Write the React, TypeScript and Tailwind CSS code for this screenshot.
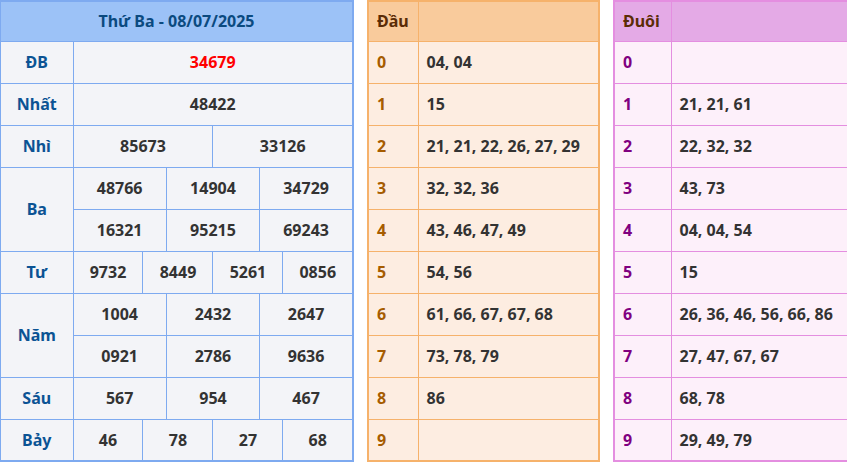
import React from 'react';

const lb = 'border border-[#7eaaf0] text-[#0b5394] font-bold text-center bg-[#f3f4f8]';
const cb = 'border border-[#7eaaf0] text-[#333] font-bold text-center bg-[#f3f4f8]';

const dau = ['04, 04', '15', '21, 21, 22, 26, 27, 29', '32, 32, 36', '43, 46, 47, 49', '54, 56', '61, 66, 67, 67, 68', '73, 78, 79', '86', ''];
const duoi = ['', '21, 21, 61', '22, 32, 32', '43, 73', '04, 04, 54', '15', '26, 36, 46, 56, 66, 86', '27, 47, 67, 67', '68, 78', '29, 49, 79'];

function Row({ label, vals, rows = 1 }: { label: string; vals: string[][]; rows?: number }) {
  return (
    <>
      {vals.map((r, i) => (
        <tr key={i} className="h-[42px]">
          {i === 0 && <td rowSpan={rows} className={lb}>{label}</td>}
          {r.map((v, j) => (
            <td key={j} colSpan={12 / r.length} className={`${cb} ${label === 'ĐB' ? 'text-[#ff0000]' : ''}`}>{v}</td>
          ))}
        </tr>
      ))}
    </>
  );
}

export default function App() {
  return (
    <div className="flex items-start bg-white text-[16px] font-['Liberation_Sans',Arial,sans-serif] w-[847px] h-[463px] overflow-hidden">
      <table className="table-fixed border-collapse w-[355px] -ml-px shrink-0 border-2 border-[#7eaaf0]">
        <colgroup>
          <col className="w-[73px]" />
          {Array.from({ length: 12 }).map((_, i) => <col key={i} />)}
        </colgroup>
        <tbody>
          <tr className="h-[40px]">
            <td colSpan={13} className="bg-[#9cc2f7] text-[#0b4a80] font-bold text-center border border-[#7eaaf0]">Thứ Ba - 08/07/2025</td>
          </tr>
          <Row label="ĐB" vals={[['34679']]} />
          <Row label="Nhất" vals={[['48422']]} />
          <Row label="Nhì" vals={[['85673', '33126']]} />
          <Row label="Ba" rows={2} vals={[['48766', '14904', '34729'], ['16321', '95215', '69243']]} />
          <Row label="Tư" vals={[['9732', '8449', '5261', '0856']]} />
          <Row label="Năm" rows={2} vals={[['1004', '2432', '2647'], ['0921', '2786', '9636']]} />
          <Row label="Sáu" vals={[['567', '954', '467']]} />
          <Row label="Bảy" vals={[['46', '78', '27', '68']]} />
        </tbody>
      </table>
      <table className="table-fixed border-collapse w-[233px] ml-[13px] shrink-0 border-2 border-[#f6b26b]">
        <colgroup><col className="w-[50px]" /><col /></colgroup>
        <tbody>
          <tr className="h-[40px] bg-[#f9cb9c]">
            <td className="border border-[#f6b26b] px-2 font-bold text-[#5b2c06]">Đầu</td>
            <td className="border border-[#f6b26b]"></td>
          </tr>
          {dau.map((v, i) => (
            <tr key={i} className="h-[42px] bg-[#fdede1]">
              <td className="border border-[#f6b26b] px-2 font-bold text-[#a65c00]">{i}</td>
              <td className="border border-[#f6b26b] px-2 font-bold text-[#333] whitespace-nowrap">{v}</td>
            </tr>
          ))}
        </tbody>
      </table>
      <table className="table-fixed border-collapse w-[245px] ml-[13px] shrink-0 border-2 border-[#e48ee0]">
        <colgroup><col className="w-[57px]" /><col /></colgroup>
        <tbody>
          <tr className="h-[40px] bg-[#e4aae6]">
            <td className="border border-[#e48ee0] px-2 font-bold text-[#5b2c06]">Đuôi</td>
            <td className="border border-[#e48ee0]"></td>
          </tr>
          {duoi.map((v, i) => (
            <tr key={i} className="h-[42px] bg-[#fdf0fa]">
              <td className="border border-[#e48ee0] px-2 font-bold text-[#800080]">{i}</td>
              <td className="border border-[#e48ee0] px-2 font-bold text-[#333] whitespace-nowrap">{v}</td>
            </tr>
          ))}
        </tbody>
      </table>
    </div>
  );
}
